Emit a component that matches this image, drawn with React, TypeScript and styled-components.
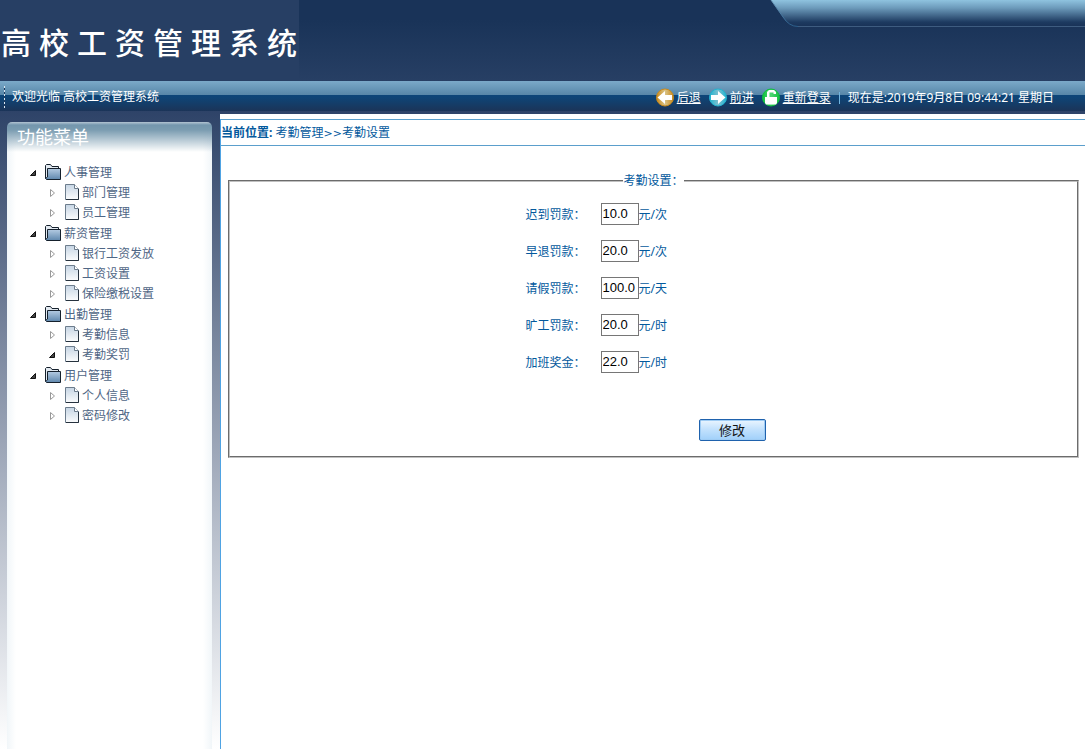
import React from 'react';
import styled, { createGlobalStyle } from 'styled-components';

const GlobalStyle = createGlobalStyle`
  * { box-sizing: border-box; }
  body {
    margin: 0;
    font-family: "Noto Sans", "Noto Sans CJK SC", sans-serif;
    font-size: 12px;
    line-height: 20px;
    color: #03599d;
    background: #fff;
  }
`;

const Page = styled.div`
  display: flex;
  flex-direction: column;
  min-height: 100vh;
`;

const Header = styled.header`
  position: relative;
  height: 81px;
  background: linear-gradient(#193358, #193358 25%, #273f64);
`;

const Brand = styled.h1`
  display: flex;
  align-items: center;
  gap: 8px;
  width: 299px;
  height: 81px;
  margin: 0;
  padding: 0 0 0 1px;
  background: #273f64;
  color: #fff;
  font: 500 30px/40px "Noto Sans CJK SC", sans-serif;
  white-space: nowrap;
`;

const Corner = styled.svg`
  position: absolute;
  top: 0;
  right: 0;
`;

const Bar = styled.div`
  display: flex;
  align-items: center;
  justify-content: space-between;
  height: 30px;
  padding: 1px 31px 0 4px;
  color: #fff;
  background: linear-gradient(#7ba9c9, #5786a8 14px, #0d4579 14px, #0f4475 17px, #1b3458 30px);
`;

const Welcome = styled.div`
  display: flex;
  align-items: center;
  gap: 7px;
`;

const Grip = styled.span`
  width: 1px;
  height: 22px;
  background: repeating-linear-gradient(#dbe7f1 0 2px, #1f3a5c 2px 4px);
`;

const Tools = styled.nav`
  display: flex;
  align-items: center;
  gap: 8px;
  padding-top: 2px;
`;

const ToolLink = styled.a`
  display: flex;
  align-items: center;
  gap: 3px;
  color: #fff;
  text-decoration: underline;
`;

const Clock = styled.time`
  padding-left: 8px;
  line-height: 12px;
  border-left: 1px solid #6fb4e0;
`;

const Body = styled.div`
  display: flex;
  flex: 1;
  background: linear-gradient(#2e4368, #fff);
`;

const Sidebar = styled.aside`
  display: flex;
  flex: 0 0 220px;
  padding: 11px 8px 0 7px;
`;

const Panel = styled.div`
  flex: 1;
  border-radius: 5px 5px 0 0;
  background:
    linear-gradient(#b3c4d3, #7396ad 3px, #7b9cb1 8px, rgba(255, 255, 255, 0) 30px),
    linear-gradient(90deg, #f1f6f9, #fff 9px, #fff calc(100% - 9px), #f1f6f9);
`;

const PanelTitle = styled.h2`
  margin: 0;
  padding: 2px 10px 0;
  color: #fff;
  font-size: 18px;
  font-weight: 400;
  line-height: 26px;
`;

const Tree = styled.ul`
  margin: 0;
  padding: 13px 0 0 22px;
  list-style: none;
`;

const Group = styled.li`
  margin-bottom: 1px;
`;

const SubTree = styled.ul`
  margin: 0;
  padding: 0 0 0 19px;
  list-style: none;
`;

const Node = styled.a<{ $leaf?: boolean }>`
  display: flex;
  align-items: center;
  gap: ${p => (p.$leaf ? 2 : 3)}px;
  height: 20px;
  color: #4f6685;
  text-decoration: none;
  white-space: nowrap;
  svg { margin-top: -2px; }
  svg:first-child { margin-right: ${p => (p.$leaf ? 7 : 5)}px; margin-top: 0; }
`;

const Main = styled.main`
  flex: 1;
  min-width: 0;
  margin-top: 3px;
  padding-top: 5px;
  background: #fff;
`;

const Frame = styled.div`
  min-height: 100%;
  border-left: 1px solid #4fa3e3;
`;

const Crumbs = styled.div`
  height: 27px;
  line-height: 25px;
  border: solid #5b9fcc;
  border-width: 1px 0;
`;

const Arrows = styled.span`
  font-family: "DejaVu Sans", sans-serif;
  font-size: 11px;
`;

const Form = styled.form`
  padding: 25px 6px 0 7px;
`;

const Fieldset = styled.fieldset`
  min-width: 0;
  margin: 0;
  padding: 5px 0 15px;
  border: 2px groove #c0c0c0;
`;

const Legend = styled.legend`
  margin: 0 auto;
  padding: 0;
`;

const Fields = styled.div`
  display: flex;
  flex-direction: column;
  width: 256px;
  margin: 0 auto;
`;

const Row = styled.div`
  display: flex;
  align-items: center;
  height: 37px;
`;

const Label = styled.label`
  width: 75px;
`;

const Amount = styled.input`
  width: 38px;
  height: 22px;
  margin-bottom: 2px;
  padding: 1px;
  border: 1px solid #767676;
  border-radius: 0;
  background: #fff;
  color: #000;
  font: 13px "Liberation Sans", sans-serif;
`;

const Submit = styled.button`
  align-self: flex-end;
  width: 67px;
  height: 22px;
  margin: 38px 16px 0 0;
  padding: 0;
  border: 1px solid #1f62ad;
  border-radius: 2px;
  background: linear-gradient(#eaf5ff, #c4e2fd 45%, #a0d0fa);
  box-shadow: inset 0 0 0 1px #9fccf4;
  color: #111;
  font: 13px/20px "Noto Sans CJK SC", sans-serif;
`;

const Triangle = ({ open }: { open?: boolean }) => (
  <svg width="8" height="10" aria-hidden="true">
    {open
      ? <path d="M1.5 7.500H6.500V2.500Z" fill="#444" stroke="#111" />
      : <path d="M2.500 1.500V8.500L6.500 5Z" fill="#fff" stroke="#999" />}
  </svg>
);

const FolderIcon = () => (
  <svg width="16" height="16" viewBox="0 0 16 16" aria-hidden="true">
    <defs>
      <linearGradient id="folderFill" x1="0" y1="0" x2="0" y2="1">
        <stop offset="0" stopColor="#b4cbe2" />
        <stop offset="1" stopColor="#5f87ad" />
      </linearGradient>
    </defs>
    <path d="M.5 14.500V1.500L1.500.5H5.500L7 2.500H13.500V4" fill="#e3eaf1" stroke="#15202c" />
    <path d="M2.500 4.500H15.500V15.500H1.500L.5 14.500L2.500 13Z" fill="url(#folderFill)" stroke="#15202c" />
  </svg>
);

const PageIcon = () => (
  <svg width="15" height="16" viewBox="0 0 15 16" aria-hidden="true">
    <defs>
      <linearGradient id="pageFill" x1="0" y1="0" x2="0" y2="1">
        <stop offset="0" stopColor="#c6d5e4" />
        <stop offset="1" stopColor="#fbfcfd" />
      </linearGradient>
    </defs>
    <path d="M.5.5H9.500L13.500 4.500V15.500H.5Z" fill="url(#pageFill)" stroke="#6c7c8c" />
    <path d="M9.500.5V4.500H13.500" fill="#fff" stroke="#6c7c8c" />
    <path d="M13.500 5V15.500H1" fill="none" stroke="#26323e" />
  </svg>
);

const ICONS = {
  back: { light: '#d9c489', dark: '#c98a1c', shape: 'M1.500 9.500L9 3V7H16V12H9V16Z' },
  forward: { light: '#7cc0d0', dark: '#22b4d0', shape: 'M16.500 9.500L9 3V7H2V12H9V16Z' },
  login: { light: '#4fd673', dark: '#10c03e', shape: 'M3 9H5V4L7 2H12L14 4V6H11.500V4.500H7.500V9H15V15L14 16.500H4L3 15Z' },
};

const ToolIcon = ({ kind }: { kind: keyof typeof ICONS }) => (
  <svg width="18" height="19" viewBox="0 0 18 19" aria-hidden="true">
    <defs>
      <linearGradient id={kind} x1="0" y1="0" x2="1" y2="0">
        <stop offset="0" stopColor={ICONS[kind].dark} />
        <stop offset=".5" stopColor={ICONS[kind].light} />
        <stop offset="1" stopColor={ICONS[kind].dark} />
      </linearGradient>
    </defs>
    <circle cx="9" cy="9.500" r="8.500" fill={`url(#${kind})`} stroke={ICONS[kind].dark} />
    <path d={ICONS[kind].shape} fill="#fff" />
  </svg>
);

type Leaf = { name: string; open?: boolean };

const MENU: { name: string; items: Leaf[] }[] = [
  { name: '人事管理', items: [{ name: '部门管理' }, { name: '员工管理' }] },
  { name: '薪资管理', items: [{ name: '银行工资发放' }, { name: '工资设置' }, { name: '保险缴税设置' }] },
  { name: '出勤管理', items: [{ name: '考勤信息' }, { name: '考勤奖罚', open: true }] },
  { name: '用户管理', items: [{ name: '个人信息' }, { name: '密码修改' }] },
];

const FIELDS = [
  { id: 'late', label: '迟到罚款：', value: '10.0', unit: '元/次' },
  { id: 'early', label: '早退罚款：', value: '20.0', unit: '元/次' },
  { id: 'leave', label: '请假罚款：', value: '100.0', unit: '元/天' },
  { id: 'absent', label: '旷工罚款：', value: '20.0', unit: '元/时' },
  { id: 'overtime', label: '加班奖金：', value: '22.0', unit: '元/时' },
];

export default function App() {
  return (
    <Page>
      <GlobalStyle />
      <Header>
        <Brand>
          {[...'高校工资管理系统'].map(char => <span key={char}>{char}</span>)}
        </Brand>
        <Corner width="315" height="28" viewBox="0 0 315 28" aria-hidden="true">
          <defs>
            <linearGradient id="cornerFill" x1="0" y1="0" x2="0" y2="1">
              <stop offset="0" stopColor="#8fc3df" />
              <stop offset=".3" stopColor="#6d9bbb" />
              <stop offset=".85" stopColor="#1d3a60" />
              <stop offset="1" stopColor="#193358" />
            </linearGradient>
            <linearGradient id="cornerEdge" x1="0" y1="0" x2="0" y2="1">
              <stop offset="0" stopColor="#6d9bbb" />
              <stop offset="1" stopColor="#2b5f8c" />
            </linearGradient>
          </defs>
          <path d="M1 0L13 17Q19 26 28 26H315V0Z" fill="url(#cornerFill)" />
          <path d="M1 0L13 17Q19 26.500 28 26.500" fill="none" stroke="url(#cornerEdge)" />
          <path d="M28 26.500H315" stroke="#3e5c80" />
        </Corner>
      </Header>
      <Bar>
        <Welcome>
          <Grip />
          <span>欢迎光临 高校工资管理系统</span>
        </Welcome>
        <Tools>
          <ToolLink href="#back"><ToolIcon kind="back" />后退</ToolLink>
          <ToolLink href="#forward"><ToolIcon kind="forward" />前进</ToolLink>
          <ToolLink href="#login"><ToolIcon kind="login" />重新登录</ToolLink>
          <Clock>现在是:2019年9月8日 09:44:21 星期日</Clock>
        </Tools>
      </Bar>
      <Body>
        <Sidebar>
          <Panel>
            <PanelTitle>功能菜单</PanelTitle>
            <Tree>
              {MENU.map(group => (
                <Group key={group.name}>
                  <Node href="#menu"><Triangle open /><FolderIcon />{group.name}</Node>
                  <SubTree>
                    {group.items.map(item => (
                      <li key={item.name}>
                        <Node $leaf href="#page"><Triangle open={item.open} /><PageIcon />{item.name}</Node>
                      </li>
                    ))}
                  </SubTree>
                </Group>
              ))}
            </Tree>
          </Panel>
        </Sidebar>
        <Main>
          <Frame>
            <Crumbs><b>当前位置:</b> 考勤管理<Arrows>&gt;&gt;</Arrows>考勤设置</Crumbs>
            <Form onSubmit={e => e.preventDefault()}>
              <Fieldset>
                <Legend>考勤设置：</Legend>
                <Fields>
                  {FIELDS.map(f => (
                    <Row key={f.id}>
                      <Label htmlFor={f.id}>{f.label}</Label>
                      <Amount id={f.id} type="text" defaultValue={f.value} />
                      <span>{f.unit}</span>
                    </Row>
                  ))}
                  <Submit type="submit">修改</Submit>
                </Fields>
              </Fieldset>
            </Form>
          </Frame>
        </Main>
      </Body>
    </Page>
  );
}
